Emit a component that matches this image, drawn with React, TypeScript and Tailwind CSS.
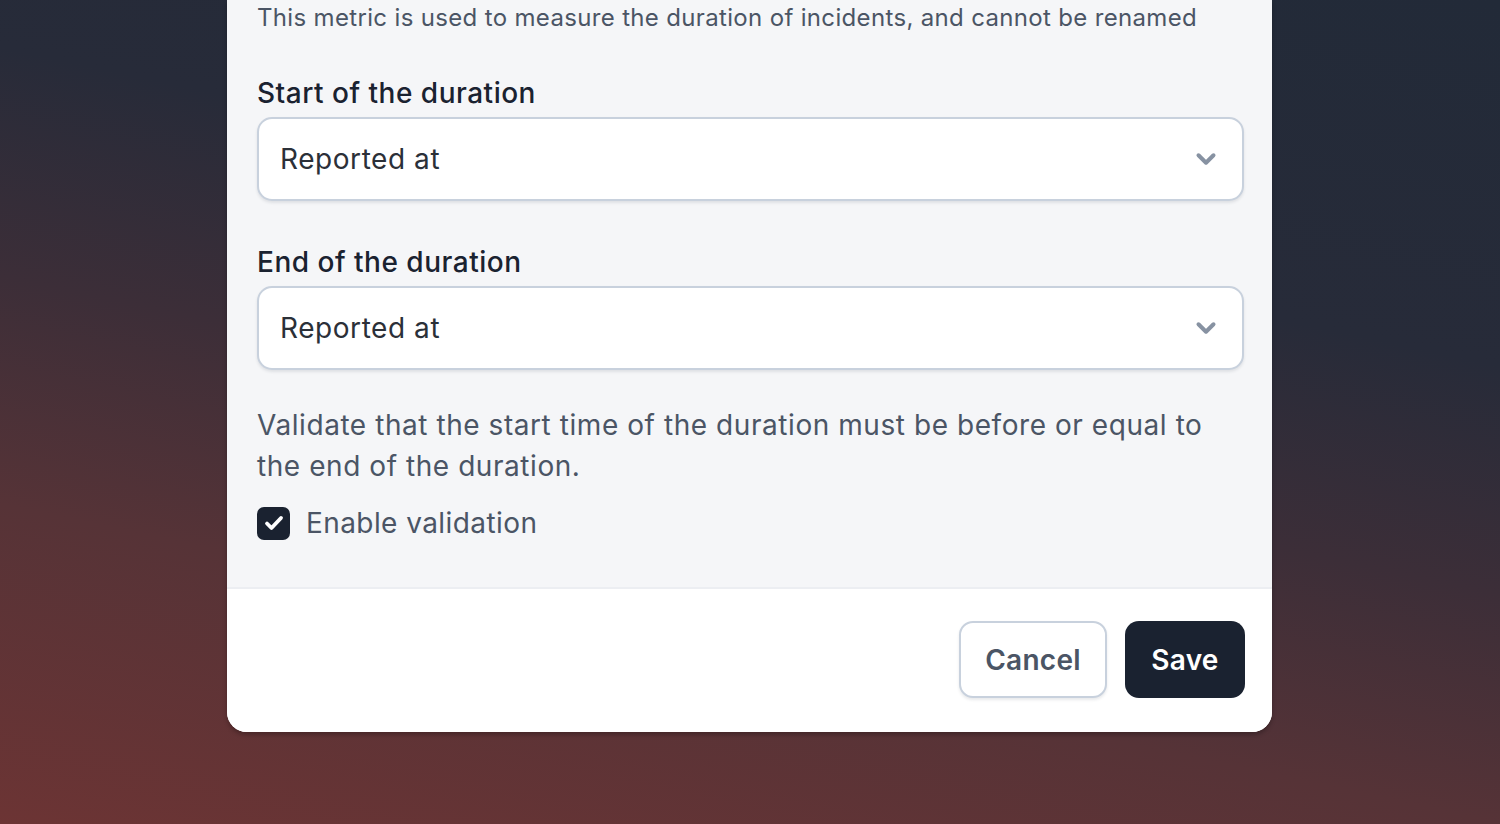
import { ChevronDown } from 'lucide-react';

function DurationSelect({ label, value }: { label: string; value: string }) {
  return (
    <div className="flex flex-col gap-[4px]">
      <label className="text-[28px] leading-[40px] font-medium tracking-[0.018em] text-[#1a2230]">{label}</label>
      <button
        type="button"
        className="flex h-[84px] w-full items-center justify-between rounded-[15px] border-2 border-[#c8d1dd] bg-white pl-[21px] pr-[21px] shadow-[0_2px_3px_rgba(30,40,60,0.10)]"
      >
        <span className="text-[28px] tracking-[0.02em] text-[#2b3038]">{value}</span>
        <ChevronDown className="h-[30px] w-[30px] text-[#8792a2]" strokeWidth={3.2} />
      </button>
    </div>
  );
}

export default function App() {
  return (
    <div
      className="flex min-h-screen w-full flex-col overflow-hidden bg-[linear-gradient(12deg,#6c3434_0%,#563337_28%,#3c2e38_48%,#272b39_68%,#222a38_100%)] pl-[227px]"
      style={{ fontFamily: 'Inter, "Noto Sans", sans-serif' }}
    >
      <div className="w-[1045px] overflow-hidden rounded-b-[20px] bg-white shadow-[0_3px_4px_rgba(0,0,0,0.25)]">
        {/* body */}
        <div className="flex flex-col bg-[#f5f6f8] pl-[30px] pr-[28px] pb-[44px]">
          <p className="text-[24px] leading-[36px] tracking-[0.014em] text-[#4b5565]">
            This metric is used to measure the duration of incidents, and cannot be renamed
          </p>

          <div className="mt-[37px]">
            <DurationSelect label="Start of the duration" value="Reported at" />
          </div>
          <div className="mt-[41px]">
            <DurationSelect label="End of the duration" value="Reported at" />
          </div>

          <p className="mt-[35px] text-[28px] leading-[41px] tracking-[0.02em] text-[#4b5565]">
            Validate that the start time of the duration must be before or equal to the end of the duration.
          </p>

          <label className="mt-[16px] flex h-[40px] items-center gap-[16px]">
            <span className="flex h-[33px] w-[33px] items-center justify-center rounded-[7px] bg-[#1a2230]">
              <svg viewBox="0 0 24 24" className="h-[24px] w-[24px]" fill="none" stroke="white" strokeWidth={3.8} strokeLinecap="round" strokeLinejoin="round">
                <path d="M5 12.5l4.5 4.5L19 7" />
              </svg>
            </span>
            <span className="text-[28px] tracking-[0.015em] text-[#4b5565]">Enable validation</span>
          </label>
        </div>

        {/* footer */}
        <div className="flex justify-end gap-[18px] border-t-2 border-[#eceef2] bg-white pl-[30px] pr-[27px] pt-[32px] pb-[34px]">
          <button
            type="button"
            className="flex h-[77px] w-[148px] items-center justify-center rounded-[14px] border-2 border-[#c8d1dd] bg-white text-[28px] font-semibold tracking-[0.01em] text-[#4b5565] shadow-[0_2px_3px_rgba(30,40,60,0.10)]"
          >
            Cancel
          </button>
          <button
            type="button"
            className="flex h-[77px] w-[120px] items-center justify-center rounded-[14px] bg-[#1a2230] text-[28px] font-semibold tracking-[0.01em] text-white"
          >
            Save
          </button>
        </div>
      </div>
    </div>
  );
}
